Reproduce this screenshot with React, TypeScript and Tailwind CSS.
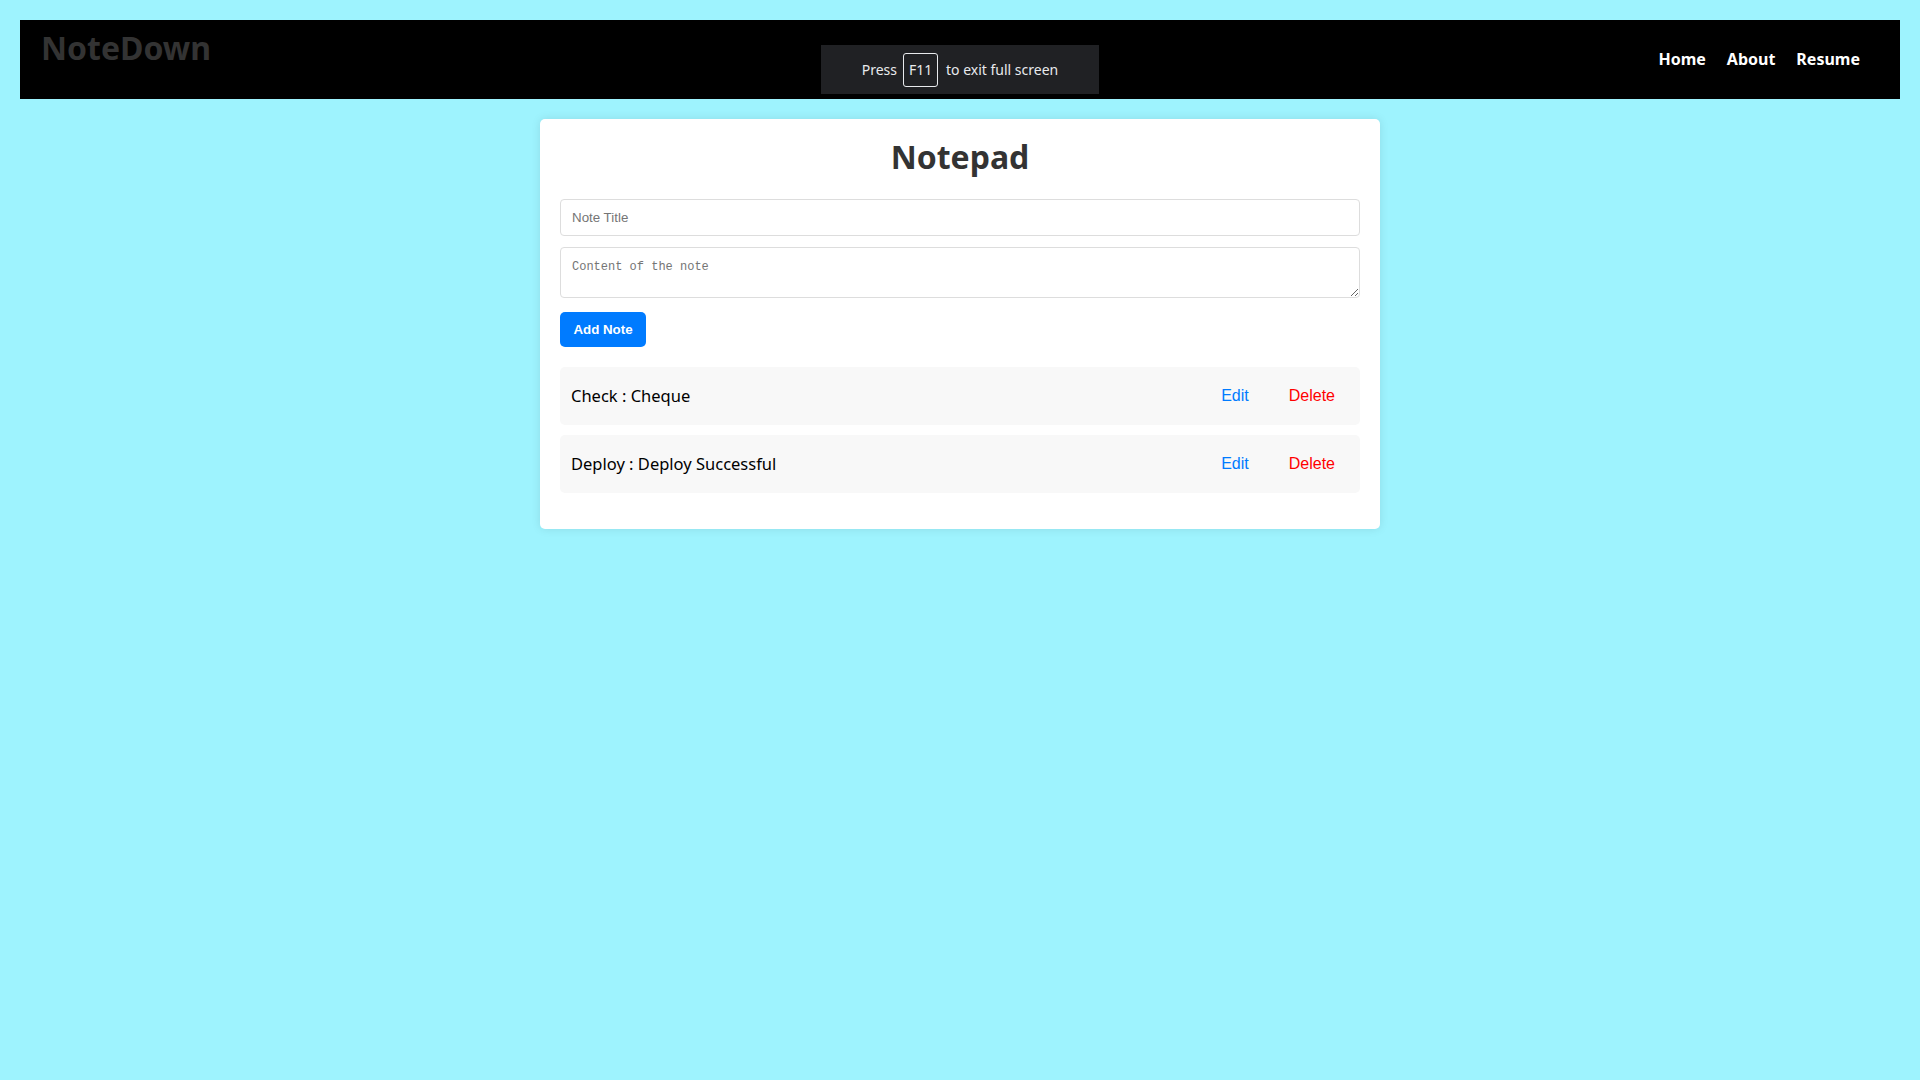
import React from "react";

interface Note {
  title: string;
  content: string;
}

const notes: Note[] = [
  { title: "Check", content: "Cheque" },
  { title: "Deploy", content: "Deploy Successful" },
];

const NavBar = () => {
  return (
    <nav className="relative flex h-[79px] justify-between bg-black pl-[21px] pr-[40px]">
      <div className="pt-[12px] text-[32px] leading-[32px] font-bold text-[#333333] font-['Noto_Sans',sans-serif]">
        NoteDown
      </div>
      <div className="flex items-center gap-[21px] pb-[2px] text-[16px] font-bold text-white font-['Noto_Sans',sans-serif]">
        <a href="#">Home</a>
        <a href="#">About</a>
        <a href="#">Resume</a>
      </div>
    </nav>
  );
};

const NoteRow = ({ note }: { note: Note }) => {
  return (
    <div className="flex h-[58px] items-center justify-between rounded-[5px] bg-[#f8f8f8] pl-[11px] pr-[25px]">
      <span className="text-[16.5px] text-black font-['Noto_Sans',sans-serif]">
        {note.title} : {note.content}
      </span>
      <div className="flex gap-[40px] text-[16px] font-['Liberation_Sans',Arial,sans-serif]">
        <button className="text-[#007bff]">Edit</button>
        <button className="text-[#ff0000]">Delete</button>
      </div>
    </div>
  );
};

const App = () => {
  return (
    <div className="relative min-h-screen bg-[#9ef3fe] p-[20px]">
      <NavBar />

      {/* browser fullscreen hint */}
      <div className="absolute left-1/2 top-[45px] flex h-[49px] w-[278px] -translate-x-1/2 items-center justify-center bg-[#202124] text-[14px] text-[#e8eaed] font-['Noto_Sans',sans-serif]">
        <span>Press</span>
        <span className="ml-[6px] mr-[8px] flex h-[34px] w-[35px] items-center justify-center rounded-[3px] border border-[#e8eaed]">
          F11
        </span>
        <span>to exit full screen</span>
      </div>

      <div className="mx-auto mt-[20px] w-[840px] rounded-[5px] bg-white px-[20px] pt-[22px] pb-[36px] shadow-[0_0_10px_rgba(0,0,0,0.1)]">
        <h1 className="text-center text-[32px] leading-[32px] font-bold text-[#333333] font-['Noto_Sans',sans-serif]">
          Notepad
        </h1>
        <input
          type="text"
          placeholder="Note Title"
          className="mt-[26px] block h-[37px] w-full rounded-[4px] border border-[#dddddd] px-[11px] text-[13.33px] outline-none placeholder:text-[#757575] font-['Liberation_Sans',Arial,sans-serif]"
        />
        <textarea
          placeholder="Content of the note"
          className="mt-[11px] block h-[51px] w-full rounded-[4px] border border-[#dddddd] px-[11px] pt-[10px] text-[12px] outline-none placeholder:text-[#757575] font-['Liberation_Mono',monospace]"
        />
        <button className="mt-[14px] block h-[35px] w-[86px] rounded-[5px] bg-[#007bff] text-[13.33px] font-bold text-white font-['Liberation_Sans',Arial,sans-serif]">
          Add Note
        </button>
        <div className="mt-[20px] flex flex-col gap-[10px]">
          {notes.map((n) => (
            <NoteRow key={n.title} note={n} />
          ))}
        </div>
      </div>
    </div>
  );
};

export default App;
